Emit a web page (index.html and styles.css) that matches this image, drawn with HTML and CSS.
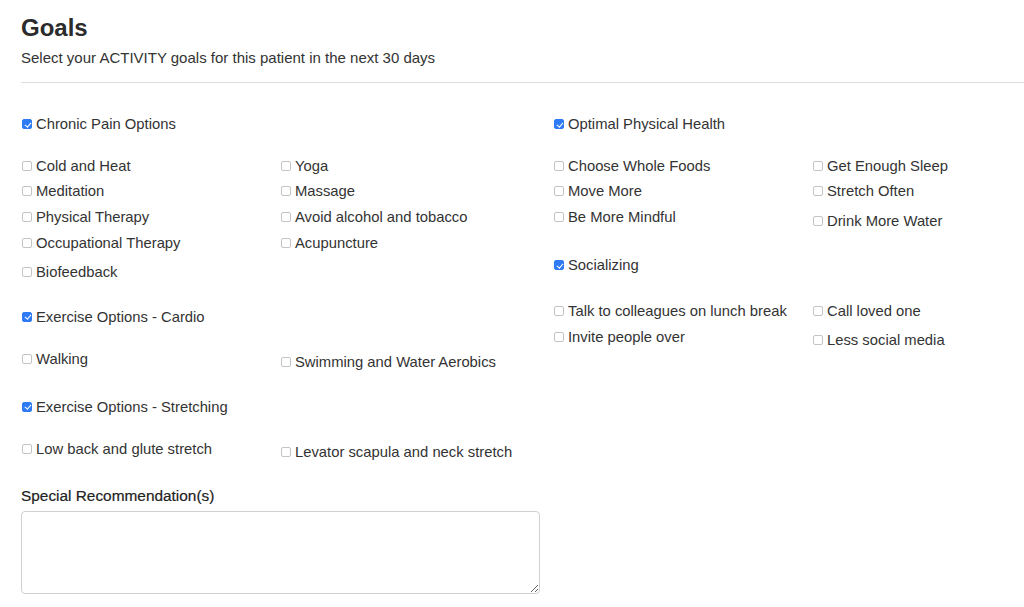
FILE: index.html
```html
<!DOCTYPE html>
<html lang="en">
<head>
  <meta charset="UTF-8">
  <title>Goals</title>
  <meta name="viewport" content="width=device-width, initial-scale=1">
  <link rel="stylesheet" href="styles.css">
</head>
<body>
<section class="goals">
  <h1>Goals</h1>
  <p class="subtitle">Select your ACTIVITY goals for this patient in the next 30 days</p>
  <hr>
  <div class="columns">
    <div class="column">
      <div class="group">
        <label class="group-head"><input type="checkbox" checked> Chronic Pain Options</label>
        <div class="options">
          <div class="sub">
            <label class="opt"><input type="checkbox"> Cold and Heat</label>
            <label class="opt"><input type="checkbox"> Meditation</label>
            <label class="opt"><input type="checkbox"> Physical Therapy</label>
            <label class="opt"><input type="checkbox"> Occupational Therapy</label>
            <label class="opt shift"><input type="checkbox"> Biofeedback</label>
          </div>
          <div class="sub">
            <label class="opt"><input type="checkbox"> Yoga</label>
            <label class="opt"><input type="checkbox"> Massage</label>
            <label class="opt"><input type="checkbox"> Avoid alcohol and tobacco</label>
            <label class="opt"><input type="checkbox"> Acupuncture</label>
          </div>
        </div>
      </div>
      <div class="group">
        <label class="group-head"><input type="checkbox" checked> Exercise Options - Cardio</label>
        <div class="options">
          <div class="sub">
            <label class="opt"><input type="checkbox"> Walking</label>
          </div>
          <div class="sub">
            <label class="opt shift"><input type="checkbox"> Swimming and Water Aerobics</label>
          </div>
        </div>
      </div>
      <div class="group">
        <label class="group-head"><input type="checkbox" checked> Exercise Options - Stretching</label>
        <div class="options">
          <div class="sub">
            <label class="opt"><input type="checkbox"> Low back and glute stretch</label>
          </div>
          <div class="sub">
            <label class="opt shift"><input type="checkbox"> Levator scapula and neck stretch</label>
          </div>
        </div>
      </div>
      <label class="field-label" for="special">Special Recommendation(s)</label>
      <textarea id="special" class="notes"></textarea>
    </div>
    <div class="column">
      <div class="group">
        <label class="group-head"><input type="checkbox" checked> Optimal Physical Health</label>
        <div class="options">
          <div class="sub">
            <label class="opt"><input type="checkbox"> Choose Whole Foods</label>
            <label class="opt"><input type="checkbox"> Move More</label>
            <label class="opt"><input type="checkbox"> Be More Mindful</label>
          </div>
          <div class="sub">
            <label class="opt"><input type="checkbox"> Get Enough Sleep</label>
            <label class="opt"><input type="checkbox"> Stretch Often</label>
            <label class="opt shift"><input type="checkbox"> Drink More Water</label>
          </div>
        </div>
      </div>
      <div class="group">
        <label class="group-head spaced"><input type="checkbox" checked> Socializing</label>
        <div class="options">
          <div class="sub">
            <label class="opt"><input type="checkbox"> Talk to colleagues on lunch break</label>
            <label class="opt"><input type="checkbox"> Invite people over</label>
          </div>
          <div class="sub">
            <label class="opt"><input type="checkbox"> Call loved one</label>
            <label class="opt shift"><input type="checkbox"> Less social media</label>
          </div>
        </div>
      </div>
    </div>
  </div>
</section>
</body>
</html>
```

FILE: styles.css
```css
html, body {
    overflow: hidden;
}

body {
    margin: 0;
    background: #fff;
    color: #333;
    font-family: "Liberation Sans", Arial, sans-serif;
}

.goals {
    padding: 14px 0 0 21px;
    width: 1051px;
}

h1 {
    margin: 0;
    font-size: 24px;
    line-height: 28px;
    font-weight: bold;
    color: #2b2b2b;
}

.subtitle {
    margin: 7px 0 0;
    font-size: 15px;
    line-height: 18px;
}

hr {
    margin: 15px 0 31px;
    border: 0;
    border-top: 1px solid #dcdcdc;
}

.columns {
    display: grid;
    grid-template-columns: 519px 519px;
    column-gap: 13px;
}

.group {
    margin-bottom: 22px;
}

.group-head {
    display: flex;
    align-items: center;
    height: 20px;
    margin-bottom: 19px;
    font-size: 14.8px;
}

.group-head.spaced {
    margin-bottom: 23px;
}

.options {
    display: grid;
    grid-template-columns: 259px 260px;
}

.sub {
    display: flex;
    flex-direction: column;
}

.opt {
    display: flex;
    align-items: center;
    height: 25.67px;
    font-size: 14.8px;
}

.opt.shift {
    margin-top: 3.5px;
}

input[type="checkbox"] {
    appearance: none;
    -webkit-appearance: none;
    width: 10px;
    height: 10px;
    margin: 0 4px 0 1px;
    border: 1px solid #c4c4c4;
    border-radius: 2px;
    background: #fff;
    flex: none;
    position: relative;
}

input[type="checkbox"]:checked {
    background: #2f7bf5;
    border-color: #2f7bf5;
}

input[type="checkbox"]:checked::after {
    content: "";
    position: absolute;
    left: 2.5px;
    top: 0.5px;
    width: 2.5px;
    height: 5px;
    border: solid #fff;
    border-width: 0 1.5px 1.5px 0;
    transform: rotate(40deg);
}

.field-label {
    display: block;
    margin-top: -1px;
    font-size: 15.4px;
    font-weight: normal;
    -webkit-text-stroke: 0.2px #222;
    line-height: 20px;
    color: #222;
}

.notes {
    display: block;
    box-sizing: border-box;
    width: 519px;
    height: 83px;
    margin-top: 5px;
    border: 1px solid #d0d0d0;
    border-radius: 4px;
    resize: vertical;
}
```
